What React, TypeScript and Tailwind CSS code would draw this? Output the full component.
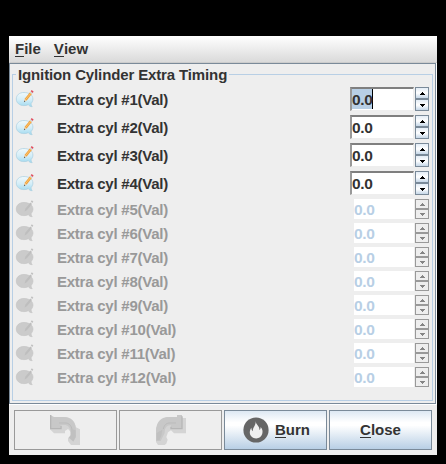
import React from 'react';

function NoteIcon({ disabled }: { disabled: boolean }) {
  const rim = disabled ? '#c4c4c4' : '#a9cfdf';
  return (
    <svg width="20" height="20" viewBox="0 0 20 20" className="block shrink-0">
      <defs>
        <linearGradient id="bubble" x1="0" y1="0" x2="0" y2="1">
          <stop offset="0" stopColor="#f0f9fc" />
          <stop offset="0.5" stopColor="#d5eef8" />
          <stop offset="1" stopColor="#9fd9ef" />
        </linearGradient>
      </defs>
      <path
        d="M9 3.500C4.200 3.500 1.300 6.200 1.300 10c0 4 3.300 6.600 7.700 6.600 1.600 0 3-.3 4.200-.9 1 1.300 2.400 2 4 2-.9-1-1.200-2.200-1-3.400 1.100-1.100 1.700-2.600 1.700-4.300C17.900 6 14 3.500 9 3.500z"
        fill={disabled ? '#cbcbcb' : 'url(#bubble)'}
        stroke={rim}
        strokeWidth="0.7"
      />
      {disabled ? (
        <>
          <path d="M9.500 12.500l1-3 4.900-6 1.600 1.400-5.200 6.400z" fill="#bebebe" />
          <path d="M15.800 2.700l1-1.500 1.500 1.300-.9 1.600z" fill="#c0c0c0" />
        </>
      ) : (
        <>
          <path d="M9.200 12.800l.9-3.500 4.900-6 1.900 1.600-5 6.400z" fill="#f1a23c" />
          <path d="M10.900 10.200l5.100-6.200" stroke="#ffd488" strokeWidth="0.7" />
          <path d="M9.200 11.500l.5-1.500 1.600 1.200-1 .7z" fill="#f6dfc0" />
          <path d="M8.900 13.300l.4-1.900 1.100 1z" fill="#555" />
          <path d="M15 3.300l.7-.9 2 1.700-.8 1z" fill="#c9d1d8" />
          <path d="M15.700 2.300l1-1.300 1.900 1.600-.8 1.400z" fill="#e04b5c" />
        </>
      )}
    </svg>
  );
}

function Arrow({ down, disabled }: { down?: boolean; disabled: boolean }) {
  return (
    <span
      className={
        'flex flex-1 items-center justify-center border ' +
        (disabled ? 'border-[#999] bg-[#eee]' : 'border-[#7a8a99] bg-linear-to-b from-[#e4edf6] via-white to-[#c5d7e8]')
      }
    >
      <svg width="5" height="3" viewBox="0 0 5 3" shapeRendering="crispEdges">
        <path
          d={down ? 'M0 0h5v1H4v1H3v1H2V2H1V1H0z' : 'M2 0h1v1h1v1h1v1H0V2h1V1h1z'}
          fill={disabled ? '#858585' : '#000'}
        />
      </svg>
    </span>
  );
}

function Row({ n }: { n: number }) {
  const disabled = n > 4;
  return (
    <div className={'flex items-center ' + (disabled ? 'h-[24px]' : 'h-[28px]')}>
      <div className="ml-[2px] w-[42px]">
        <NoteIcon disabled={disabled} />
      </div>
      <span
        className={
          'flex-1 pt-[2px] text-[15px] leading-[18px] tracking-[-0.24px] ' + (disabled ? 'text-[#999]' : 'text-[#333]')
        }
      >
        Extra cyl #{n}(Val)
      </span>
      {disabled ? (
        <div className="h-[20px] w-[60px] bg-white pt-px text-[15.5px] leading-[20px] tracking-[-0.4px] text-[#b8cfe5]">
          0.0
        </div>
      ) : (
        <div className="flex h-[24px] w-[64px] border-t-2 border-l-2 border-r border-b border-t-[#7f7f7f] border-l-[#999] border-r-[#eee] border-b-[#eee] bg-white text-[15.5px] leading-[22px] tracking-[-0.4px] text-[#333]">
          {n === 1 ? <span className="h-[20px] w-[21px] border-r border-black bg-[#b8cfe5]">0.0</span> : '0.0'}
        </div>
      )}
      <div className={'mr-[3px] ml-px flex w-[14px] flex-col ' + (disabled ? 'h-[20px]' : 'h-[24px]')}>
        <Arrow disabled={disabled} />
        <Arrow down disabled={disabled} />
      </div>
    </div>
  );
}

function TurnIcon({ redo }: { redo?: boolean }) {
  return (
    <svg width="30" height="30" viewBox="0 0 90 90" className={redo ? 'ml-px' : 'ml-[-1px]'}>
      {redo ? (
        <>
          <path d="M15 21L30 6h33V0h15v9h12v46H54l-9-9-9 6-5 14 4 8-4 12-5 4H6l-6-9V39z" fill="#d4d4d4" />
          <path d="M0 78V45c2-26 16-39 39-39h24V0h15v42H45V30h3c-18 0-22 10-22 24L14 78z" fill="#c8c8c8" />
          <path d="M78 4v37H45v-6" fill="none" stroke="#b6b6b6" strokeWidth="4" />
          <path d="M60 24H42c-12 0-18 7-20 18" fill="none" stroke="#bbb" strokeWidth="3" />
          <path d="M2 54l17-10-3 18-6 14H2z" fill="#c0c0c0" />
        </>
      ) : (
        <>
          <path d="M0 0l9 6h34c19 0 32 12 35 31l12 6v47H63l-9-12v-9l9-6V51l-9-9-9 6v7H12L0 43z" fill="#d4d4d4" />
          <path d="M0 0l12 6h28c26 0 38 16 38 42v18l-8 14-14-12 5-7V51c0-13-7-21-18-21H31v12H0z" fill="#c8c8c8" />
          <path d="M2 0v41h31v-9" fill="none" stroke="#b6b6b6" strokeWidth="4" />
          <path d="M27 24h18c12 0 19 7 21 20" fill="none" stroke="#bbb" strokeWidth="3" />
          <path d="M63 42l14 4v20l-7 13-13-11 6-7z" fill="#c0c0c0" />
        </>
      )}
    </svg>
  );
}

function BurnIcon() {
  return (
    <svg width="26" height="26" viewBox="0 0 26 26" className="block">
      <circle cx="13" cy="13" r="12.600" fill="#666" />
      <path
        d="M12.600 4c.2 3.500 4.400 5.500 3.800 9 1-.5 1.300-1.800 1.200-2.900 1.900 2 2.400 4.500 1.600 6.900-.8 2.700-3 4.400-6 4.400-3.500 0-6.200-2.200-6.400-5.600-.1-2 .6-3.700 1.600-5.100 0 1.500.3 2.700 1.400 3.500C9.400 10.500 13.200 8.500 12.600 4z"
        fill="#f0f0f0"
      />
    </svg>
  );
}

const activeButton =
  'flex h-[40px] w-[103px] items-center justify-center border border-[#7a8a99] bg-[linear-gradient(to_bottom,#dde8f3_0%,#ffffff_30%,#ffffff_38%,#b8cfe5_100%)]';
const idleButton = 'flex h-[40px] w-[103px] items-center justify-center border border-[#999]';

function Mnemonic({ text }: { text: string }) {
  return (
    <span className="flex">
      <span className="h-[17px] border-b border-[#333]">{text[0]}</span>
      {text.slice(1)}
    </span>
  );
}

export default function App() {
  return (
    <div className="h-[464px] w-[446px] overflow-hidden bg-black pt-[36px] pl-[9px] font-['Liberation_Sans',Arial,sans-serif] text-[15px] leading-[18px] font-bold text-[#333]">
      <div className="flex h-[419px] w-[428px] flex-col bg-[#eee]">
        <div className="flex h-[27px] gap-[13px] border-b border-[#ccc] bg-linear-to-b from-white to-[#dadada] pt-[4px] pl-[6px]">
          <Mnemonic text="File" />
          <Mnemonic text="View" />
        </div>
        <div className="h-[342px] border-r border-b border-white">
          <div className="h-[341px] border border-[#7a8a99] pt-[2px] pr-[2px] pl-[2px]">
            <fieldset className="h-[335px] border border-[#b8cfe5]">
              <legend className="ml-[3px] h-[17px] px-[2px] tracking-[-0.13px]">Ignition Cylinder Extra Timing</legend>
              <div className="pt-[2px]">
                {[1, 2, 3, 4, 5, 6, 7, 8, 9, 10, 11, 12].map((n) => (
                  <Row key={n} n={n} />
                ))}
              </div>
            </fieldset>
          </div>
        </div>
        <div className="flex gap-[2px] pt-[5px] pl-[5px]">
          <div className={idleButton}>
            <TurnIcon />
          </div>
          <div className={idleButton}>
            <TurnIcon redo />
          </div>
          <div className={activeButton + ' gap-[6px] pl-[2px]'}>
            <BurnIcon />
            <Mnemonic text="Burn" />
          </div>
          <div className={activeButton}>
            <Mnemonic text="Close" />
          </div>
        </div>
      </div>
    </div>
  );
}
